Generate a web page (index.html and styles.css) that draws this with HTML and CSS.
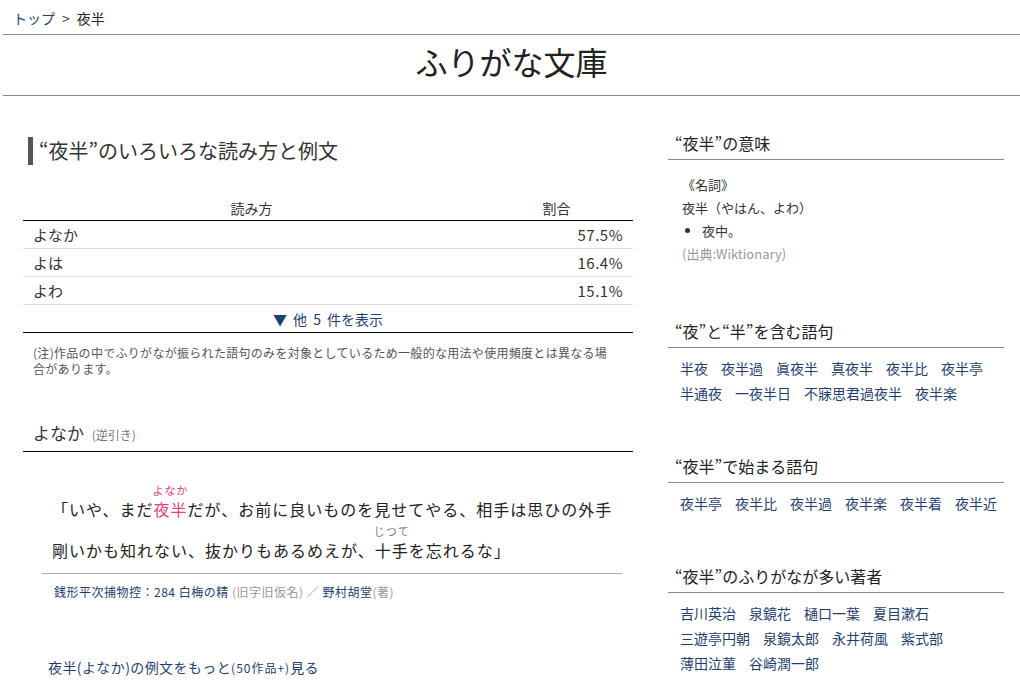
FILE: index.html
```html
<!DOCTYPE html>
<html lang="ja">
  <head>
    <meta charset="UTF-8" />
    <meta name="viewport" content="width=device-width, initial-scale=1.0" />
    <title>夜半 - ふりがな文庫</title>
    <link rel="stylesheet" href="styles.css">
  </head>
  <body>
    <header class="site-header">
      <nav class="breadcrumb">
        <a href="#">トップ</a><span class="sep">&gt;</span><span class="current">夜半</span>
      </nav>
      <div class="site-title">ふりがな文庫</div>
    </header>

    <div class="wrapper">
      <main class="main-col">
        <h2 class="section-title">“夜半”のいろいろな読み方と例文</h2>

        <table class="readings">
          <thead>
            <tr>
              <th class="col-yomi">読み方</th>
              <th class="col-rate">割合</th>
            </tr>
          </thead>
          <tbody>
            <tr><td>よなか</td><td class="rate">57.5%</td></tr>
            <tr><td>よは</td><td class="rate">16.4%</td></tr>
            <tr><td>よわ</td><td class="rate">15.1%</td></tr>
            <tr class="more-row"><td colspan="2"><a href="#">▼ 他 5 件を表示</a></td></tr>
          </tbody>
        </table>

        <p class="note">
          (注)作品の中でふりがなが振られた語句のみを対象としているため一般的な用法や使用頻度とは異なる場合があります。
        </p>

        <h3 class="reading-title">よなか <small>(逆引き)</small></h3>

        <div class="example">
          <p class="quote">「いや、まだ<ruby class="hl"><rb>夜半</rb><rt>よなか</rt></ruby>だが、お前に良いものを見せてやる、相手は思ひの外手剛いかも知れない、抜かりもあるめえが、<ruby><rb>十手</rb><rt>じつて</rt></ruby>を忘れるな」</p>
          <div class="source">
            <a href="#">銭形平次捕物控：284 白梅の精</a>
            <span class="muted">(旧字旧仮名) ／</span>
            <a href="#">野村胡堂</a><span class="muted">(著)</span>
          </div>
        </div>

        <a class="more-link" href="#">夜半(よなか)の例文をもっと<small>(50作品+)</small>見る</a>
      </main>

      <aside class="side-col">
        <section class="side-box first">
          <h3 class="side-title">“夜半”の意味</h3>
          <div class="meaning">
            <div>《名詞》</div>
            <div>夜半（やはん、よわ）</div>
            <ul>
              <li>夜中。</li>
            </ul>
            <div class="muted">(出典:Wiktionary)</div>
          </div>
        </section>

        <section class="side-box">
          <h3 class="side-title">“夜”と“半”を含む語句</h3>
          <div class="word-list">
            <a href="#">半夜</a><a href="#">夜半過</a><a href="#">眞夜半</a><a href="#">真夜半</a><a href="#">夜半比</a><a href="#">夜半亭</a>
            <a href="#">半通夜</a><a href="#">一夜半日</a><a href="#">不寐思君過夜半</a><a href="#">夜半楽</a>
          </div>
        </section>

        <section class="side-box">
          <h3 class="side-title">“夜半”で始まる語句</h3>
          <div class="word-list">
            <a href="#">夜半亭</a><a href="#">夜半比</a><a href="#">夜半過</a><a href="#">夜半楽</a><a href="#">夜半着</a><a href="#">夜半近</a>
          </div>
        </section>

        <section class="side-box">
          <h3 class="side-title">“夜半”のふりがなが多い著者</h3>
          <div class="word-list">
            <a href="#">吉川英治</a><a href="#">泉鏡花</a><a href="#">樋口一葉</a><a href="#">夏目漱石</a>
            <a href="#">三遊亭円朝</a><a href="#">泉鏡太郎</a><a href="#">永井荷風</a><a href="#">紫式部</a>
            <a href="#">薄田泣菫</a><a href="#">谷崎潤一郎</a>
          </div>
        </section>
      </aside>
    </div>
  </body>
</html>
```

FILE: styles.css
```css
body {
  margin: 0;
  font-family: "Noto Sans CJK JP", "Noto Sans", sans-serif;
  color: #333;
  background-color: white;
}
a {
  color: #1f3f73;
  text-decoration: none;
}
.muted {
  color: #999;
}

/* header */
.site-header {
  margin-left: 3px;
}
.breadcrumb {
  padding: 8px 10px 6px;
  font-size: 14px;
  line-height: 20px;
  border-bottom: 1px solid #888;
}
.breadcrumb .sep {
  margin: 0 7px;
  color: #333;
}
.breadcrumb .current {
  color: #222;
}
.site-title {
  text-align: center;
  font-size: 32px;
  line-height: 52px;
  padding-bottom: 8px;
  color: #222;
  border-bottom: 1px solid #888;
}

/* layout */
.wrapper {
  display: flex;
  gap: 35px;
  padding-left: 23px;
}
.main-col {
  width: 610px;
}
.side-col {
  width: 336px;
}

/* main column */
.section-title {
  margin: 41px 0 0 5px;
  padding-left: 6px;
  border-left: 5px solid #555;
  font-size: 20px;
  font-weight: normal;
  line-height: 28px;
  color: #333;
}
.readings {
  width: 100%;
  margin-top: 31px;
  border-collapse: collapse;
  font-size: 15px;
}
.readings th {
  font-size: 14px;
  font-weight: normal;
  height: 24px;
  padding: 0;
  border-bottom: 1px solid #000;
}
.col-yomi {
  width: 457px;
}
.readings td {
  height: 27px;
  padding: 0 10px;
  border-bottom: 1px solid #ddd;
}
.readings .rate {
  text-align: right;
  letter-spacing: 0.5px;
}
.readings .more-row td {
  text-align: center;
  font-size: 14px;
  word-spacing: 3px;
  border-bottom: 1px solid #000;
}
.note {
  margin: 12px 0 0;
  padding: 0 20px 0 10px;
  font-size: 12px;
  line-height: 16px;
  letter-spacing: 0.3px;
  color: #555;
}
.reading-title {
  margin: 44px 0 0;
  padding: 0 10px 4px;
  font-size: 17px;
  font-weight: normal;
  line-height: 24px;
  border-bottom: 1px solid #000;
}
.reading-title small {
  font-size: 12px;
  color: #777;
  margin-left: 4px;
}
.example {
  margin: 0 10px 0 19px;
}
.quote {
  margin: 0;
  padding: 37px 0 2px 10px;
  width: 570px;
  font-size: 16px;
  line-height: 41px;
  letter-spacing: 1px;
  color: #222;
  border-bottom: 1px solid #aaa;
}
/* furigana sits above its base word */
.quote ruby {
  display: inline-block;
  position: relative;
  line-height: 23px;
}
.quote rt {
  display: block;
  position: absolute;
  left: 50%;
  bottom: 100%;
  transform: translateX(-50%);
  margin-bottom: 1px;
  white-space: nowrap;
  font-size: 11px;
  line-height: 14px;
  letter-spacing: 1px;
  color: #6a7fa8;
}
.quote .hl,
.quote .hl rt {
  color: #e8407f;
}
.source {
  margin-top: 9px;
  padding-left: 12px;
  font-size: 12px;
  line-height: 18px;
  letter-spacing: 0.5px;
}
.more-link {
  display: block;
  margin-top: 56px;
  padding-left: 25px;
  font-size: 14px;
  line-height: 20px;
  letter-spacing: 0.4px;
}
.more-link small {
  font-size: 12px;
  letter-spacing: 1px;
}

/* sidebar */
.side-box {
  margin-top: 48px;
}
.side-box.first {
  margin-top: 35px;
}
.side-title {
  margin: 0;
  padding: 0 0 4px 7px;
  font-size: 16px;
  font-weight: normal;
  line-height: 24px;
  color: #222;
  border-bottom: 1px solid #888;
}
.meaning {
  margin-top: 13px;
  padding: 0 0 6px 14px;
  font-size: 13px;
  line-height: 23px;
}
.meaning ul {
  margin: 0;
  padding: 0;
  list-style: none;
}
.meaning li {
  position: relative;
  padding-left: 20px;
}
.meaning li::before {
  content: "";
  position: absolute;
  left: 3px;
  top: 9px;
  width: 5px;
  height: 5px;
  border-radius: 50%;
  background-color: #333;
}
.word-list {
  display: flex;
  flex-wrap: wrap;
  column-gap: 13px;
  margin-top: 8px;
  padding-left: 12px;
  font-size: 14px;
  line-height: 25px;
}
```
